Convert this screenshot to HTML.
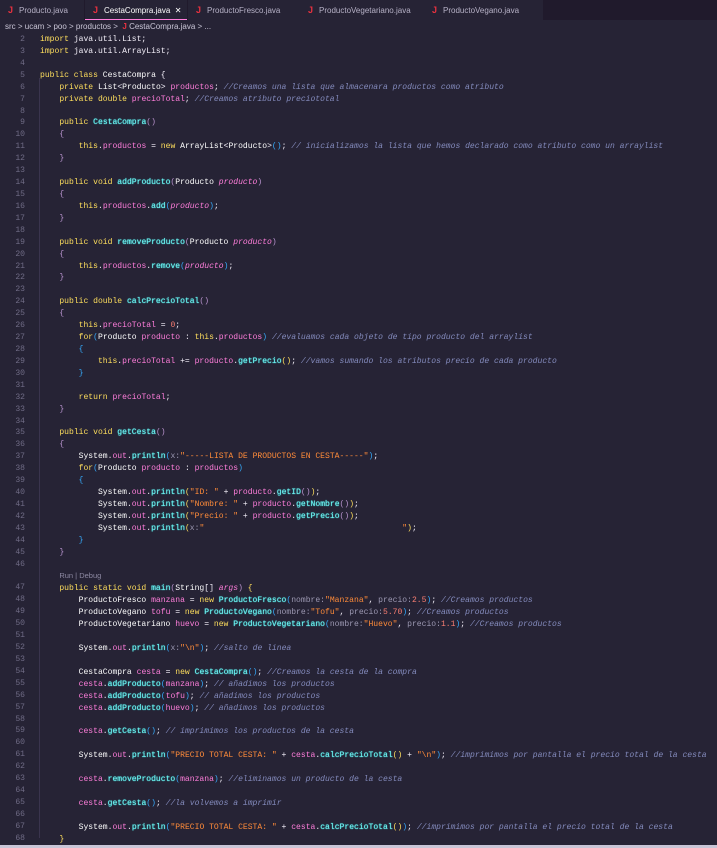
<!DOCTYPE html>
<html><head><meta charset="utf-8"><style>
*{margin:0;padding:0;box-sizing:border-box}
body{width:717px;height:848px;background:#262335;overflow:hidden;font-family:"Liberation Sans",sans-serif;position:relative}
.tabs{position:absolute;left:0;top:0;width:717px;height:20px;background:#201a2c}
.tab{position:absolute;top:0;height:20px;background:#262335;color:#b6b1c6;font-size:8px;line-height:20px;padding-left:8px;white-space:nowrap}
.tab b{color:#e8313f;font-weight:bold;margin-right:6px;font-size:9px}
.tab.act{color:#fff;border-bottom:1px solid #ff7edb}
.crumb{position:absolute;left:5px;top:22px;font-size:8px;color:#c9c5d6;white-space:pre}
.crumb b{color:#e8313f}
.ed{position:absolute;left:0;top:34px;font-family:"Liberation Mono",monospace;font-size:8.05px;line-height:11.92px;white-space:pre;color:#f2eef8}
.ln{position:absolute;left:0;top:0;width:25px;text-align:right;color:#6f6b85}
.code{position:absolute;left:40px;top:0;width:680px}
.k{color:#fede5d}.f{color:#72f1f0;text-shadow:0 0 1px #36f9f6}.v{color:#ff7edb}.p{color:#ff7edb;font-style:italic}
.s{color:#ff8b39}.c{color:#848bbd;font-style:italic}.t{color:#fdfdfd}.h{color:#9c98b2}.n{color:#f97e72}.b{color:#36a9f9}.m{color:#b893ce}
.lens{color:#8d89a2;font-family:"Liberation Sans",sans-serif;font-size:7.5px}
.gl{position:absolute;left:39px;top:78px;width:1px;height:760px;background:#3a344e}
</style></head><body>
<div class="tabs">
<div class="tab" style="left:0;width:84px;background:#262335"><b>J</b>Producto.java</div>
<div class="tab act" style="left:85px;width:102px"><b>J</b>CestaCompra.java &nbsp;✕</div>
<div class="tab" style="left:188px;width:112px"><b>J</b>ProductoFresco.java</div>
<div class="tab" style="left:300px;width:124px"><b>J</b>ProductoVegetariano.java</div>
<div class="tab" style="left:424px;width:119px"><b>J</b>ProductoVegano.java</div>
</div>
<div class="crumb">src &gt; ucam &gt; poo &gt; productos &gt;  <b>J</b> CestaCompra.java &gt; ...</div>
<div class="gl"></div>
<div class="ed"><div class="ln">2
3
4
5
6
7
8
9
10
11
12
13
14
15
16
17
18
19
20
21
22
23
24
25
26
27
28
29
30
31
32
33
34
35
36
37
38
39
40
41
42
43
44
45
46

47
48
49
50
51
52
53
54
55
56
57
58
59
60
61
62
63
64
65
66
67
68</div><div class="code"><span class="k">import</span> java.util.List;
<span class="k">import</span> java.util.ArrayList;

<span class="k">public class</span> <span class="t">CestaCompra</span> {
    <span class="k">private</span> <span class="t">List</span>&lt;<span class="t">Producto</span>&gt; <span class="v">productos</span>; <span class="c">//Creamos una lista que almacenara productos como atributo</span>
    <span class="k">private double</span> <span class="v">precioTotal</span>; <span class="c">//Creamos atributo preciototal</span>

    <span class="k">public</span> <span class="f">CestaCompra</span><span class="m">()</span>
    <span class="m">{</span>
        <span class="k">this</span>.<span class="v">productos</span> = <span class="k">new</span> <span class="t">ArrayList</span>&lt;<span class="t">Producto</span>&gt;<span class="b">()</span>; <span class="c">// inicializamos la lista que hemos declarado como atributo como un arraylist</span>
    <span class="m">}</span>

    <span class="k">public void</span> <span class="f">addProducto</span><span class="m">(</span><span class="t">Producto</span> <span class="p">producto</span><span class="m">)</span>
    <span class="m">{</span>
        <span class="k">this</span>.<span class="v">productos</span>.<span class="f">add</span><span class="b">(</span><span class="p">producto</span><span class="b">)</span>;
    <span class="m">}</span>

    <span class="k">public void</span> <span class="f">removeProducto</span><span class="m">(</span><span class="t">Producto</span> <span class="p">producto</span><span class="m">)</span>
    <span class="m">{</span>
        <span class="k">this</span>.<span class="v">productos</span>.<span class="f">remove</span><span class="b">(</span><span class="p">producto</span><span class="b">)</span>;
    <span class="m">}</span>

    <span class="k">public double</span> <span class="f">calcPrecioTotal</span><span class="m">()</span>
    <span class="m">{</span>
        <span class="k">this</span>.<span class="v">precioTotal</span> = <span class="n">0</span>;
        <span class="k">for</span><span class="b">(</span><span class="t">Producto</span> <span class="v">producto</span> : <span class="k">this</span>.<span class="v">productos</span><span class="b">)</span> <span class="c">//evaluamos cada objeto de tipo producto del arraylist</span>
        <span class="b">{</span>
            <span class="k">this</span>.<span class="v">precioTotal</span> += <span class="v">producto</span>.<span class="f">getPrecio</span><span class="k">()</span>; <span class="c">//vamos sumando los atributos precio de cada producto</span>
        <span class="b">}</span>

        <span class="k">return</span> <span class="v">precioTotal</span>;
    <span class="m">}</span>

    <span class="k">public void</span> <span class="f">getCesta</span><span class="m">()</span>
    <span class="m">{</span>
        <span class="t">System</span>.<span class="v">out</span>.<span class="f">println</span><span class="b">(</span><span class="h">x:</span><span class="s">"-----LISTA DE PRODUCTOS EN CESTA-----"</span><span class="b">)</span>;
        <span class="k">for</span><span class="b">(</span><span class="t">Producto</span> <span class="v">producto</span> : <span class="v">productos</span><span class="b">)</span>
        <span class="b">{</span>
            <span class="t">System</span>.<span class="v">out</span>.<span class="f">println</span><span class="k">(</span><span class="s">"ID: "</span> + <span class="v">producto</span>.<span class="f">getID</span><span class="m">()</span><span class="k">)</span>;
            <span class="t">System</span>.<span class="v">out</span>.<span class="f">println</span><span class="k">(</span><span class="s">"Nombre: "</span> + <span class="v">producto</span>.<span class="f">getNombre</span><span class="m">()</span><span class="k">)</span>;
            <span class="t">System</span>.<span class="v">out</span>.<span class="f">println</span><span class="k">(</span><span class="s">"Precio: "</span> + <span class="v">producto</span>.<span class="f">getPrecio</span><span class="m">()</span><span class="k">)</span>;
            <span class="t">System</span>.<span class="v">out</span>.<span class="f">println</span><span class="k">(</span><span class="h">x:</span><span class="s">"                                         "</span><span class="k">)</span>;
        <span class="b">}</span>
    <span class="m">}</span>

    <span class="lens">Run | Debug</span>
    <span class="k">public static void</span> <span class="f">main</span><span class="m">(</span><span class="t">String</span>[] <span class="p">args</span><span class="m">)</span> <span class="k">{</span>
        <span class="t">ProductoFresco</span> <span class="v">manzana</span> = <span class="k">new</span> <span class="f">ProductoFresco</span><span class="b">(</span><span class="h">nombre:</span><span class="s">"Manzana"</span>, <span class="h">precio:</span><span class="n">2.5</span><span class="b">)</span>; <span class="c">//Creamos productos</span>
        <span class="t">ProductoVegano</span> <span class="v">tofu</span> = <span class="k">new</span> <span class="f">ProductoVegano</span><span class="b">(</span><span class="h">nombre:</span><span class="s">"Tofu"</span>, <span class="h">precio:</span><span class="n">5.70</span><span class="b">)</span>; <span class="c">//Creamos productos</span>
        <span class="t">ProductoVegetariano</span> <span class="v">huevo</span> = <span class="k">new</span> <span class="f">ProductoVegetariano</span><span class="b">(</span><span class="h">nombre:</span><span class="s">"Huevo"</span>, <span class="h">precio:</span><span class="n">1.1</span><span class="b">)</span>; <span class="c">//Creamos productos</span>

        <span class="t">System</span>.<span class="v">out</span>.<span class="f">println</span><span class="b">(</span><span class="h">x:</span><span class="s">"\n"</span><span class="b">)</span>; <span class="c">//salto de linea</span>

        <span class="t">CestaCompra</span> <span class="v">cesta</span> = <span class="k">new</span> <span class="f">CestaCompra</span><span class="b">()</span>; <span class="c">//Creamos la cesta de la compra</span>
        <span class="v">cesta</span>.<span class="f">addProducto</span><span class="b">(</span><span class="v">manzana</span><span class="b">)</span>; <span class="c">// añadimos los productos</span>
        <span class="v">cesta</span>.<span class="f">addProducto</span><span class="b">(</span><span class="v">tofu</span><span class="b">)</span>; <span class="c">// añadimos los productos</span>
        <span class="v">cesta</span>.<span class="f">addProducto</span><span class="b">(</span><span class="v">huevo</span><span class="b">)</span>; <span class="c">// añadimos los productos</span>

        <span class="v">cesta</span>.<span class="f">getCesta</span><span class="b">()</span>; <span class="c">// imprimimos los productos de la cesta</span>

        <span class="t">System</span>.<span class="v">out</span>.<span class="f">println</span><span class="b">(</span><span class="s">"PRECIO TOTAL CESTA: "</span> + <span class="v">cesta</span>.<span class="f">calcPrecioTotal</span><span class="k">()</span> + <span class="s">"\n"</span><span class="b">)</span>; <span class="c">//imprimimos por pantalla el precio total de la cesta</span>

        <span class="v">cesta</span>.<span class="f">removeProducto</span><span class="b">(</span><span class="v">manzana</span><span class="b">)</span>; <span class="c">//eliminamos un producto de la cesta</span>

        <span class="v">cesta</span>.<span class="f">getCesta</span><span class="b">()</span>; <span class="c">//la volvemos a imprimir</span>

        <span class="t">System</span>.<span class="v">out</span>.<span class="f">println</span><span class="b">(</span><span class="s">"PRECIO TOTAL CESTA: "</span> + <span class="v">cesta</span>.<span class="f">calcPrecioTotal</span><span class="k">()</span><span class="b">)</span>; <span class="c">//imprimimos por pantalla el precio total de la cesta</span>
    <span class="k">}</span></div></div>
<div style="position:absolute;left:0;top:845px;width:717px;height:3px;background:#c9c5d6"></div>
</body></html>
